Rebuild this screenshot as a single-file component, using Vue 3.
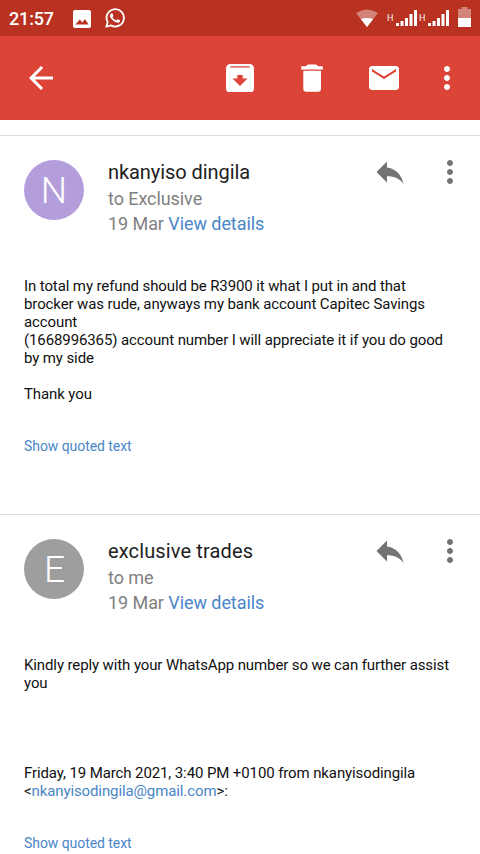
<template>
  <div class="screen">
    <div class="status">
      <span class="status__time">21:57</span>
      <svg class="status__photo" viewBox="0 0 18 18">
        <path fill-rule="evenodd" d="M2 0h14a2 2 0 0 1 2 2v14a2 2 0 0 1-2 2H2a2 2 0 0 1-2-2V2a2 2 0 0 1 2-2zM2.500 14.500h13l-3.500-5.500-2.600 3.500-2.600-3z" />
      </svg>
      <svg class="status__whatsapp" viewBox="0 0 24 24">
        <path d="M17.472 14.382c-.297-.149-1.758-.867-2.030-.967-.273-.099-.471-.148-.670.150-.197.297-.767.966-.940 1.164-.173.199-.347.223-.644.075-.297-.150-1.255-.463-2.390-1.475-.883-.788-1.480-1.761-1.653-2.059-.173-.297-.018-.458.130-.606.134-.133.298-.347.446-.520.149-.174.198-.298.298-.497.099-.198.050-.371-.025-.520-.075-.149-.669-1.612-.916-2.207-.242-.579-.487-.500-.669-.510-.173-.008-.371-.010-.570-.010-.198 0-.520.074-.792.372-.272.297-1.040 1.016-1.040 2.479 0 1.462 1.065 2.875 1.213 3.074.149.198 2.096 3.200 5.077 4.487.709.306 1.262.489 1.694.625.712.227 1.360.195 1.871.118.571-.085 1.758-.719 2.006-1.413.248-.694.248-1.289.173-1.413-.074-.124-.272-.198-.570-.347" />
        <path fill="none" stroke="#fff" stroke-width="2.200" d="M1.700 22.300l1.500-5.400A10.400 10.400 0 1 1 7.200 20.900z" />
      </svg>
      <svg class="status__wifi" viewBox="0 0 24 18">
        <path opacity=".4" d="M1 4Q12-3 23 4L12 18z" />
        <path d="M5.800 10Q12 8 18.200 10L12 18z" />
      </svg>
      <div v-for="sim in 2" :key="sim" class="signal">
        <span>H</span>
        <svg viewBox="0 0 21 16">
          <path d="M0 13h3v3H0zM4.500 11h3v5h-3zM9 8h3v8H9zM13.500 4h3v12h-3zM18 0h3v16h-3z" />
        </svg>
      </div>
      <svg class="status__battery" viewBox="0 0 13 20">
        <path opacity=".4" d="M3.500 0h6v2H13v9H0V2h3.500z" />
        <path d="M0 11h13v9H0z" />
      </svg>
    </div>

    <div class="toolbar">
      <svg class="icon toolbar__back" viewBox="0 0 24 24"><path :d="icons.back" /></svg>
      <svg class="icon" viewBox="0 0 24 24"><path fill-rule="evenodd" :d="icons.archive" /></svg>
      <svg class="icon" viewBox="0 0 24 24"><path :d="icons.trash" /></svg>
      <svg class="icon" viewBox="0 0 24 24"><path :d="icons.mail" /></svg>
      <svg class="icon toolbar__more" viewBox="0 0 24 24"><path :d="icons.more" /></svg>
    </div>

    <div class="messages">
      <div v-for="mail in mails" :key="mail.name" class="mail" :class="mail.theme">
        <div class="mail__head">
          <div class="avatar">{{ mail.letter }}</div>
          <div class="mail__info">
            <p class="mail__name">{{ mail.name }}</p>
            <p>{{ mail.to }}</p>
            <p>{{ mail.date }} <a>View details</a></p>
          </div>
          <svg class="icon mail__reply" viewBox="0 0 24 24"><path :d="icons.reply" /></svg>
          <svg class="icon mail__more" viewBox="0 0 24 24"><path :d="icons.more" /></svg>
        </div>
        <div class="mail__body">
          <p v-for="(line, i) in mail.lines" :key="i">
            <template v-if="line.email">&lt;<a>{{ line.email }}</a>&gt;:</template>
            <template v-else>{{ line }}</template>
          </p>
        </div>
        <a class="mail__quoted">Show quoted text</a>
      </div>
    </div>
  </div>
</template>

<script setup>
const icons = {
  back: 'M20 11H7.830l5.590-5.590L12 4l-8 8 8 8 1.410-1.410L7.830 13H20v-2z',
  archive: 'M5.500 2.700h13a2.800 2.800 0 0 1 2.800 2.800v13.600a2.300 2.300 0 0 1-2.300 2.300H5a2.300 2.300 0 0 1-2.300-2.300V5.500a2.800 2.800 0 0 1 2.800-2.800zM5.500 4.100v.900h13v-.900zM10.200 10v2.300H7l5 5.100 5-5.100h-3.200V10z',
  trash: 'M6.200 7.100h11.800v12a2 2 0 0 1-2 2H8.200a2 2 0 0 1-2-2zM4.800 4.200h3L9.300 3h5.400l1.500 1.200h3v2.100H4.800z',
  mail: 'M20 4H4c-1.100 0-1.990.900-1.990 2L2 18c0 1.100.900 2 2 2h16c1.100 0 2-.900 2-2V6c0-1.100-.900-2-2-2zm0 3.600l-8 5-8-5V6l8 5 8-5v1.600z',
  more: 'M12 8c1.100 0 2-.900 2-2s-.900-2-2-2-2 .900-2 2 .900 2 2 2zm0 2c-1.100 0-2 .900-2 2s.900 2 2 2 2-.900 2-2-.900-2-2-2zm0 6c-1.100 0-2 .900-2 2s.900 2 2 2 2-.900 2-2-.900-2-2-2z',
  reply: 'M10 9V5l-7 7 7 7v-4.100c5 0 8.500 1.600 11 5.100-1-5-4-10-11-11z',
}

const mails = [
  {
    name: 'nkanyiso dingila',
    letter: 'N',
    theme: 'purple',
    to: 'to Exclusive',
    date: '19 Mar',
    lines: [
      'In total my refund should be R3900 it what I put in and that',
      'brocker was rude, anyways my bank account Capitec Savings',
      'account',
      '(1668996365) account number I will appreciate it if you do good',
      'by my side',
      '',
      'Thank you',
    ],
  },
  {
    name: 'exclusive trades',
    letter: 'E',
    theme: 'grey',
    to: 'to me',
    date: '19 Mar',
    lines: [
      'Kindly reply with your WhatsApp number so we can further assist',
      'you',
      '',
      '',
      '',
      '',
      'Friday, 19 March 2021, 3:40 PM +0100 from nkanyisodingila',
      { email: 'nkanyisodingila@gmail.com' },
    ],
  },
]
</script>

<style>
body {
  margin: 0;
  overflow: hidden;
}
</style>

<style scoped>
.screen {
  width: 480px;
  height: 854px;
  overflow: hidden;
  display: flex;
  flex-direction: column;
  background: #fff;
  font-family: Roboto, "Liberation Sans", sans-serif;
}
p {
  margin: 0;
}
a {
  color: #4a86c8;
}
svg {
  display: block;
  flex: none;
  fill: #fff;
}
.icon {
  width: 36px;
  height: 36px;
}
.status {
  height: 36px;
  flex: none;
  box-sizing: border-box;
  padding: 0 9px;
  display: flex;
  align-items: center;
  background: #b93221;
  color: #fff;
}
.status__time {
  width: 63.5px;
  font-size: 18px;
  font-weight: 500;
  line-height: 36px;
  letter-spacing: -0.15px;
  padding-top: 1px;
}
.status__photo {
  width: 18px;
  height: 18px;
  margin-top: 1px;
}
.status__whatsapp {
  width: 20px;
  height: 20px;
  margin-left: 14px;
}
.status__wifi {
  width: 24px;
  height: 18px;
  margin: 0 8px 0 auto;
}
.signal {
  display: flex;
  align-items: center;
}
.signal span {
  width: 9px;
  font-size: 9px;
  line-height: 16px;
  opacity: 0.95;
}
.signal svg {
  width: 21px;
  height: 16px;
  margin-right: 2px;
}
.status__battery {
  width: 13px;
  height: 20px;
  margin: 0 0 2px 7px;
}
.toolbar {
  height: 84px;
  flex: none;
  box-sizing: border-box;
  padding: 0 15px 0 23px;
  display: flex;
  align-items: center;
  gap: 36px;
  background: #dc4437;
}
.toolbar__back {
  margin-right: auto;
}
.toolbar__more {
  margin-left: -9px;
}
.messages {
  padding-top: 15px;
}
.mail {
  border-top: 1px solid #dedede;
  height: 378px;
}
.mail__head {
  height: 141px;
  box-sizing: border-box;
  padding: 24px 12px 0 24px;
  display: flex;
  align-items: flex-start;
}
.avatar {
  width: 60px;
  height: 60px;
  margin-right: 24px;
  border-radius: 50%;
  color: #fff;
  font-size: 37px;
  font-weight: 300;
  line-height: 61px;
  text-align: center;
}
.purple .avatar {
  background: #b39ddb;
}
.grey .avatar {
  background: #9e9e9e;
  text-indent: 1px;
}
.mail__info {
  flex: 1;
  font-size: 18px;
  line-height: 25px;
  letter-spacing: -0.07px;
  color: #808080;
}
.mail__info .mail__name {
  height: 26px;
  font-size: 20px;
  line-height: 24px;
  color: #212121;
}
.grey .mail__name {
  letter-spacing: 0.13px;
}
.mail__reply,
.mail__more {
  margin-top: -6px;
  fill: #737373;
}
.mail__more {
  margin-left: 24px;
}
.mail__body {
  padding: 0 24px;
  font-size: 15px;
  line-height: 18px;
  letter-spacing: -0.11px;
  color: #111;
  white-space: nowrap;
}
.mail__body p {
  height: 18px;
}
.mail__quoted {
  display: block;
  padding: 34px 24px 0;
  font-size: 14px;
  line-height: 18px;
  letter-spacing: -0.06px;
}
</style>
